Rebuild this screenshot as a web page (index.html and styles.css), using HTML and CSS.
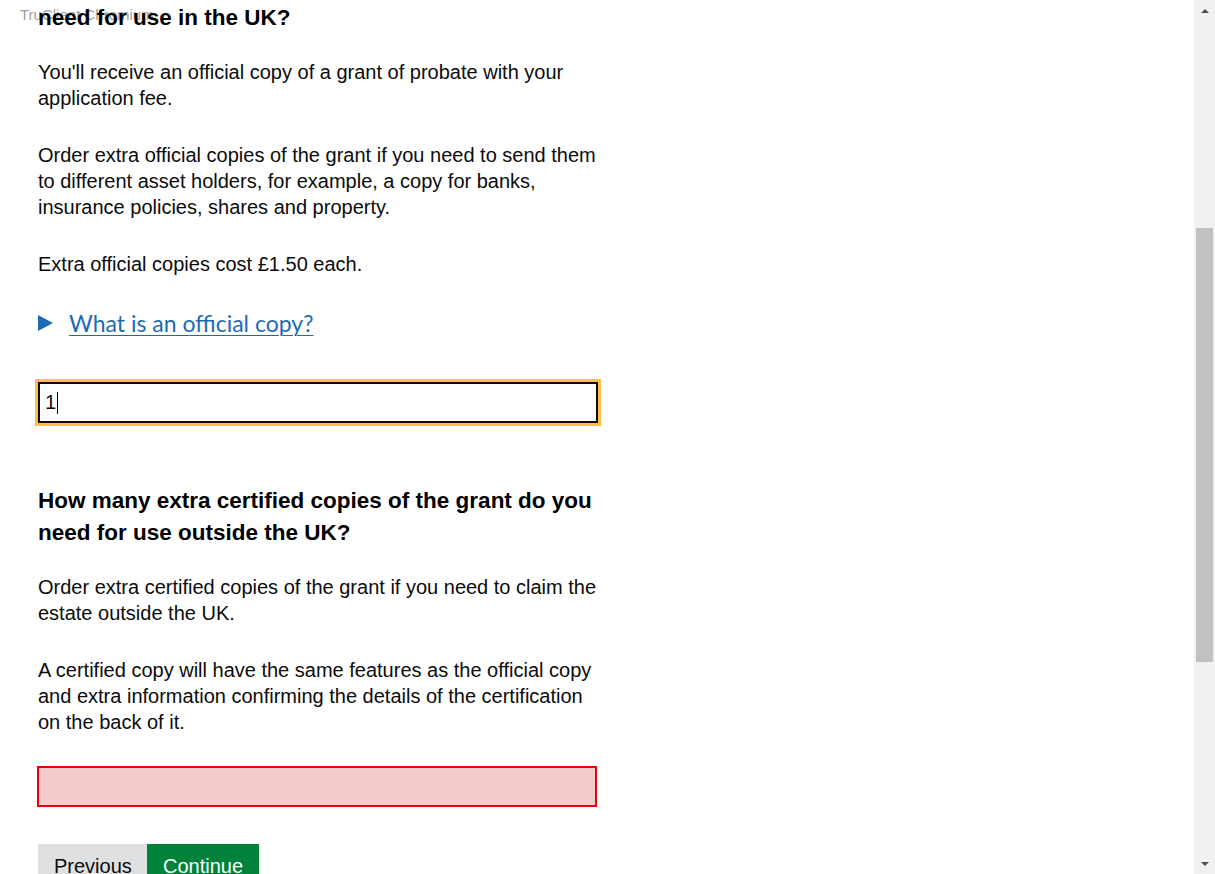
FILE: index.html
```html
<!DOCTYPE html>
<html lang="en">
<head>
<meta charset="utf-8">
<title>Copies of the grant</title>
<link rel="stylesheet" href="styles.css">
</head>
<body>
<div class="page">
  <main class="content">
    <div class="watermark">TruClient Chromium</div>
    <h1 class="heading heading-top">need for use in the UK?</h1>
    <p class="body">You'll receive an official copy of a grant of probate with your application fee.</p>
    <p class="body">Order extra official copies of the grant if you need to send them to different asset holders, for example, a copy for banks, insurance policies, shares and property.</p>
    <p class="body">Extra official copies cost £1.50 each.</p>
    <div class="details">
      <span class="arrow"></span>
      <a class="summary" href="#">What is an official copy?</a>
    </div>
    <div class="input input-focus"><span class="value">1</span><span class="caret"></span></div>

    <h2 class="heading heading-second">How many extra certified copies of the grant do you need for use outside the UK?</h2>
    <p class="body">Order extra certified copies of the grant if you need to claim the estate outside the UK.</p>
    <p class="body">A certified copy will have the same features as the official copy and extra information confirming the details of the certification on the back of it.</p>
    <div class="input input-error"></div>

    <div class="buttons">
      <button class="btn btn-prev">Previous</button>
      <button class="btn btn-continue">Continue</button>
    </div>
  </main>
  <aside class="scrollbar">
    <div class="sb-btn"><span class="sb-up"></span></div>
    <div class="sb-track"><div class="sb-thumb"></div></div>
    <div class="sb-btn"><span class="sb-down"></span></div>
  </aside>
</div>
</body>
</html>
```

FILE: styles.css
```css
html, body {
  margin: 0;
  padding: 0;
  height: 874px;
  overflow: hidden;
  background: #fff;
}
.page {
  display: flex;
  height: 874px;
}
.content {
  flex: 1;
  position: relative;
  padding-left: 38px;
  font-family: "Liberation Sans", Arial, sans-serif;
  color: #0b0c0c;
}
.watermark {
  position: absolute;
  left: 20px;
  top: 6px;
  font-size: 15px;
  color: #a0a0a0;
  font-family: "Liberation Sans", Arial, sans-serif;
  z-index: 0;
}
.heading {
  position: relative;
  z-index: 1;
  width: 560px;
  margin: 0;
  font-size: 22.5px;
  font-weight: bold;
  line-height: 32px;
  color: #000;
}
.heading-top {
  margin-top: 2px;
  margin-bottom: 25px;
}
.heading-second {
  margin-top: 62px;
  margin-bottom: 25px;
}
.body {
  width: 560px;
  margin: 0 0 31px 0;
  font-size: 20px;
  line-height: 26px;
}
.details {
  display: flex;
  align-items: center;
  gap: 16px;
  height: 40px;
  margin-top: -5px;
}
.arrow {
  width: 0;
  height: 0;
  border-left: 15px solid #1d6bb5;
  border-top: 8px solid transparent;
  border-bottom: 8px solid transparent;
}
.summary {
  font-family: Lato, "Liberation Sans", sans-serif;
  font-size: 23px;
  color: #1d6bb5;
  text-decoration: underline;
  text-underline-offset: 3px;
  text-decoration-thickness: 1px;
}
.input {
  box-sizing: border-box;
  width: 560px;
  height: 41px;
}
.input-focus {
  margin-top: 39px;
  border: 2px solid #0b0c0c;
  outline: 3px solid #ffbf47;
  display: flex;
  align-items: center;
  padding-left: 5px;
  font-size: 20px;
  color: #0b0c0c;
}
.caret {
  display: inline-block;
  width: 1px;
  height: 22px;
  background: #000;
  margin-left: 1px;
}
.input-error {
  margin-top: 30px;
  margin-left: -1px;
  border: 2px solid #e8000b;
  background: #f4cccc;
}
.buttons {
  display: flex;
  margin-top: 37px;
}
.btn {
  border: 0;
  margin: 0;
  font-family: "Liberation Sans", Arial, sans-serif;
  font-size: 20px;
  line-height: 25px;
  padding: 10px 16px 12px 16px;
  cursor: pointer;
}
.btn-prev {
  background: #dee0e2;
  color: #0b0c0c;
  width: 109px;
}
.btn-continue {
  background: #00823b;
  color: #fff;
  width: 112px;
}
.scrollbar {
  width: 21px;
  height: 874px;
  background: #f1f1f1;
  display: flex;
  flex-direction: column;
}
.sb-btn {
  height: 21px;
  display: flex;
  align-items: center;
  justify-content: center;
}
.sb-up {
  width: 0;
  height: 0;
  border-left: 4px solid transparent;
  border-right: 4px solid transparent;
  border-bottom: 4px solid #505050;
}
.sb-down {
  width: 0;
  height: 0;
  border-left: 4px solid transparent;
  border-right: 4px solid transparent;
  border-top: 4px solid #505050;
}
.sb-track {
  flex: 1;
  display: flex;
  flex-direction: column;
  align-items: center;
}
.sb-thumb {
  margin-top: 207px;
  width: 17px;
  height: 434px;
  background: #c1c1c1;
}
```
